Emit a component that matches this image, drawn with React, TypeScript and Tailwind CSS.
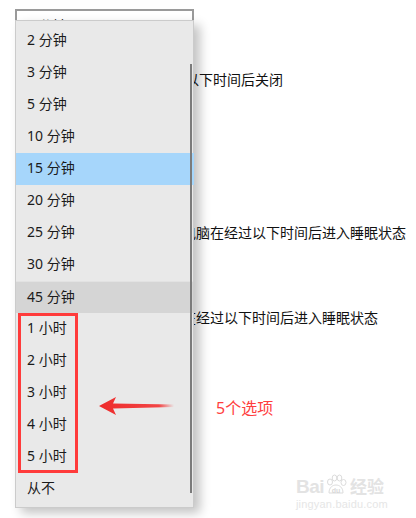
const rows = [
  '2 分钟',
  '3 分钟',
  '5 分钟',
  '10 分钟',
  '15 分钟',
  '20 分钟',
  '25 分钟',
  '30 分钟',
  '45 分钟',
  '1 小时',
  '2 小时',
  '3 小时',
  '4 小时',
  '5 小时',
  '从不',
]

const font = { fontFamily: '"Noto Sans", "Noto Sans CJK SC", sans-serif' }

function rowClass(label: string) {
  if (label === '15 分钟') return 'bg-[#a6d6fb] mr-[-1px]'
  if (label === '45 分钟') return 'bg-[#d5d5d5] border-t border-[#e2e2e2]'
  return ''
}

function Arrow() {
  return (
    <svg width="80" height="24" viewBox="0 0 80 24" className="block">
      <defs>
        <linearGradient id="tail" x1="0" y1="0" x2="1" y2="0">
          <stop offset="0" stopColor="#ee2b2b" />
          <stop offset="0.8" stopColor="#f24545" />
          <stop offset="1" stopColor="#f24545" stopOpacity="0" />
        </linearGradient>
      </defs>
      <path d="M1 12 L18 3 L15 9.5 L76 10.5 L76 13 L15 14.5 L18 21 Z" fill="url(#tail)" />
    </svg>
  )
}

function Watermark() {
  return (
    <div className="flex flex-col items-start text-[#e3e3e3]" style={{ fontFamily: '"Liberation Sans", "Noto Sans CJK SC", sans-serif' }}>
      <div className="flex items-end gap-[1px] leading-none">
        <span className="text-[19px] font-bold tracking-[-0.5px]">Bai</span>
        <svg width="22" height="22" viewBox="0 0 22 22">
          <g fill="none" stroke="#dcdcdc" strokeWidth="1">
            <ellipse cx="5" cy="8" rx="2.5" ry="3" />
            <ellipse cx="9.5" cy="4" rx="2.3" ry="3" />
            <ellipse cx="14.5" cy="4" rx="2.3" ry="3" />
            <ellipse cx="18.5" cy="8.5" rx="2.5" ry="3" />
            <path d="M4 19 C4 13 8 11 11 11 C14 11 18 13 18 19 Z" />
          </g>
          <text x="11" y="18.5" textAnchor="middle" fontSize="7" fill="#d8d8d8" fontWeight="bold">du</text>
        </svg>
        <span className="ml-[2px] text-[17px] font-bold">经验</span>
      </div>
      <div className="mt-[3px] text-[11px] leading-none tracking-[0.2px] text-[#e6e6e6]">jingyan.baidu.com</div>
    </div>
  )
}

export default function App() {
  return (
    <div className="relative h-[518px] w-[416px] overflow-hidden bg-white text-[14px] text-[#111]" style={font}>
      {/* page underneath */}
      <div className="ml-[15px] mt-[9px] flex h-[32px] w-[179px] items-center border-2 border-[#9a9a9a] bg-white pl-[10px] pt-[1px] text-[#222]">
        2 分钟
      </div>
      <div className="mt-[29px] h-[20px] whitespace-nowrap pl-[157px] leading-[20px]">经过以下时间后关闭</div>
      <div className="mt-[133px] h-[20px] whitespace-nowrap pl-[182px] leading-[20px]">电脑在经过以下时间后进入睡眠状态</div>
      <div className="mt-[65px] h-[20px] whitespace-nowrap pl-[182px] leading-[20px]">在经过以下时间后进入睡眠状态</div>
      <div className="mt-[70px] flex items-center pl-[216px] text-[16px] leading-[20px] text-[#ff3e3e]">5个选项</div>
      <div className="absolute bottom-[8px] right-[28px]">
        <Watermark />
      </div>

      {/* open dropdown */}
      <div className="absolute left-[15px] top-[20px] h-[488px] w-[179px] border border-[#cbcbcb] bg-[#e9e9e9] pt-[4px] shadow-[6px_5px_10px_rgba(0,0,0,0.24)]">
        {rows.map((label) => (
          <div key={label} className={`flex h-[32px] items-center pb-[3px] pl-[11px] text-[#1b1b1b] ${rowClass(label)}`}>
            {label}
          </div>
        ))}
        <div className="absolute right-[1px] top-[43px] h-[429px] w-[2px] bg-[#7b7b7b]" />
      </div>

      {/* annotations */}
      <div className="absolute left-[18px] top-[313px] h-[160px] w-[60px] border-[3px] border-[#ff3b3b]" />
      <div className="absolute left-[98px] top-[394px]">
        <Arrow />
      </div>
    </div>
  )
}
